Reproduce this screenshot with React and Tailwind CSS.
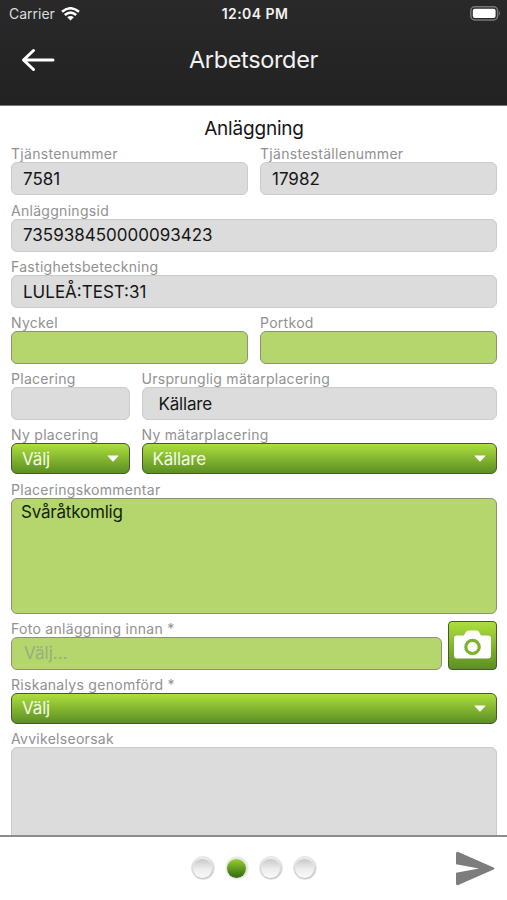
const Field = ({ label, className = "flex-1", children }) => (
  <div className={`flex min-w-0 flex-col ${className}`}>
    <label className="flex h-[23.2px] items-end whitespace-nowrap text-[14px] leading-[17px] tracking-[0.29px] text-[#919191]">
      {label}
    </label>
    {children}
  </div>
);

const ReadOnly = ({ className = "pl-[11px]", children }) => (
  <div
    className={`flex h-[33px] items-center rounded-[6px] border border-[#cbcbcb] bg-[#dcdcdc] pt-[2px] text-[17px] text-[#161616] ${className}`}
  >
    {children}
  </div>
);

const Input = ({ children }) => (
  <div className="flex h-[33px] items-center rounded-[6px] border border-[#8a9671] bg-[#b4d66c] pt-[2px] pl-3 text-[17px] text-[#9bad80]">
    {children}
  </div>
);

const Select = ({ children }) => (
  <div className="flex h-[31px] items-center justify-between rounded-[6px] border border-[#45582f] bg-linear-to-b from-[#addf3d] to-[#5c8f24] pr-[10px] pl-[10px] text-[17px] tracking-[-0.2px] text-[#f4fbe6]">
    <span className="pt-px">{children}</span>
    <svg width="12" height="7" viewBox="0 0 12 7" fill="#fff">
      <path d="M.8.4h10.4q.6 0 .2.5L6.6 6.3q-.6.6-1.2 0L.6.9Q.2.4.8.4z" />
    </svg>
  </div>
);

const Dot = ({ active }) => (
  <span
    className={`flex size-6 items-center justify-center rounded-full border ${
      active
        ? "border-[#f4f4f4] bg-[#e6e6e6]"
        : "border-[#e4e4e4] bg-linear-to-b from-[#ededed] to-[#c6c6c6]"
    }`}
  >
    <span
      className={`size-[19px] rounded-full bg-linear-to-b ${
        active ? "from-[#98d030] to-[#32690f]" : "from-[#c8c8c8] via-[#ebebeb] to-[#fafafa]"
      }`}
    />
  </span>
);

const Header = () => (
  <header className="h-[106px] shrink-0 border-b border-[#777] bg-linear-to-b from-[#292929] to-[#222] text-[#f2f2f2]">
    <div className="grid h-[27px] grid-cols-3 items-center pr-[6px] pl-[9px] text-[14px]">
      <div className="flex items-center gap-[6px] text-[#dcdcdc]">
        Carrier
        <svg width="19" height="14" viewBox="0 0 19 14" fill="none" stroke="#fff" strokeWidth="2.5">
          <path d="M1 4.8Q9.5-2.3 18 4.8M3.8 8Q9.5 3.2 15.2 8" />
          <path d="M9.5 13.4 6.2 10.2Q9.5 7.6 12.8 10.2z" fill="#fff" stroke="none" />
        </svg>
      </div>
      <div className="whitespace-nowrap text-center font-semibold tracking-[0.45px]">12:04 PM</div>
      <svg className="justify-self-end" width="31" height="15" viewBox="0 0 31 15">
        <rect x=".8" y=".8" width="26.8" height="13.2" rx="4" fill="none" stroke="#777" strokeWidth="1.5" />
        <rect x="2.8" y="2.8" width="22.8" height="9.2" rx="2" fill="#fff" />
        <path d="M29 5q2 2.4 0 4.8z" fill="#777" />
      </svg>
    </div>
    <div className="grid h-[66px] grid-cols-[80px_1fr_80px] items-center">
      <svg className="ml-[21px]" width="34" height="24" viewBox="0 0 34 24" fill="none" stroke="#fff" strokeWidth="3" strokeLinecap="round" strokeLinejoin="round">
        <path d="M32 12H3M12.5 2.5 2.5 12l10 9.5" />
      </svg>
      <h1 className="text-center text-[23.5px] tracking-[-0.35px]">Arbetsorder</h1>
    </div>
  </header>
);

const App = () => {
  return (
    <div className="flex h-[900px] w-full flex-col overflow-hidden bg-white font-['Inter','Liberation_Sans',sans-serif]">
      <Header />

      <main className="flex min-h-0 flex-1 flex-col overflow-hidden pr-[10px] pl-[11px]">
        <h2 className="h-[33.2px] shrink-0 pt-[7px] text-center text-[19px] leading-8 tracking-[-0.2px] text-[#161616]">
          Anläggning
        </h2>

        <div className="flex shrink-0 gap-3">
          <Field label="Tjänstenummer">
            <ReadOnly>7581</ReadOnly>
          </Field>
          <Field label="Tjänsteställenummer">
            <ReadOnly>17982</ReadOnly>
          </Field>
        </div>
        <Field label="Anläggningsid" className="shrink-0">
          <ReadOnly>735938450000093423</ReadOnly>
        </Field>
        <Field label="Fastighetsbeteckning" className="shrink-0">
          <ReadOnly>LULEÅ:TEST:31</ReadOnly>
        </Field>
        <div className="flex shrink-0 gap-3">
          <Field label="Nyckel">
            <Input />
          </Field>
          <Field label="Portkod">
            <Input />
          </Field>
        </div>
        <div className="flex shrink-0 gap-3">
          <Field label="Placering" className="w-[118.5px]">
            <ReadOnly />
          </Field>
          <Field label="Ursprunglig mätarplacering">
            <ReadOnly className="pl-4 tracking-[-0.2px]">Källare</ReadOnly>
          </Field>
        </div>
        <div className="flex shrink-0 gap-3">
          <Field label="Ny placering" className="w-[118.5px]">
            <Select>Välj</Select>
          </Field>
          <Field label="Ny mätarplacering">
            <Select>Källare</Select>
          </Field>
        </div>
        <Field label="Placeringskommentar" className="shrink-0">
          <div className="h-[116px] rounded-[6px] border border-[#8a9671] bg-[#b4d66c] px-[9px] pt-[2px] text-[17px] leading-[22px] tracking-[-0.2px] text-[#14240a]">
            Svåråtkomlig
          </div>
        </Field>
        <div className="flex shrink-0 items-end gap-[6px]">
          <Field label="Foto anläggning innan *">
            <Input>Välj...</Input>
          </Field>
          <button className="flex size-[49px] items-center justify-center rounded-[4px] border border-[#45582f] bg-linear-to-b from-[#addf3d] to-[#5c8f24]">
            <svg width="39" height="30" viewBox="0 0 39 30">
              <path
                d="M4 5.5h7l1.6-3Q13.4.5 15.4.5h8.2q2 0 2.8 2l1.6 3h7q3 0 3 3v17q0 3-3 3H4q-3 0-3-3v-17q0-3 3-3z"
                fill="#fff"
              />
              <circle cx="19.5" cy="17" r="6.7" fill="none" stroke="#7cb32f" strokeWidth="3.2" />
            </svg>
          </button>
        </div>
        <Field label="Riskanalys genomförd *" className="shrink-0">
          <Select>Välj</Select>
        </Field>
        <Field label="Avvikelseorsak" className="shrink-0">
          <div className="h-[116px] rounded-[6px] border border-[#cbcbcb] bg-[#dcdcdc]" />
        </Field>
      </main>

      <footer className="grid h-[65.5px] shrink-0 grid-cols-3 items-center border-t-2 border-[#8c8c8c] bg-white">
        <div className="col-start-2 flex justify-center gap-[10px]">
          <Dot />
          <Dot active />
          <Dot />
          <Dot />
        </div>
        <svg className="mr-3 justify-self-end" width="40" height="35" viewBox="0 0 40 35" fill="#7d7d7d">
          <path d="M1 2.5Q1 0 3.3 1L38.6 16.4q1.8 1.1 0 2.2L3.3 34Q1 35 1 32.5V21.8l23-4.3L1 13.2z" />
        </svg>
      </footer>
    </div>
  );
};

export default App;
